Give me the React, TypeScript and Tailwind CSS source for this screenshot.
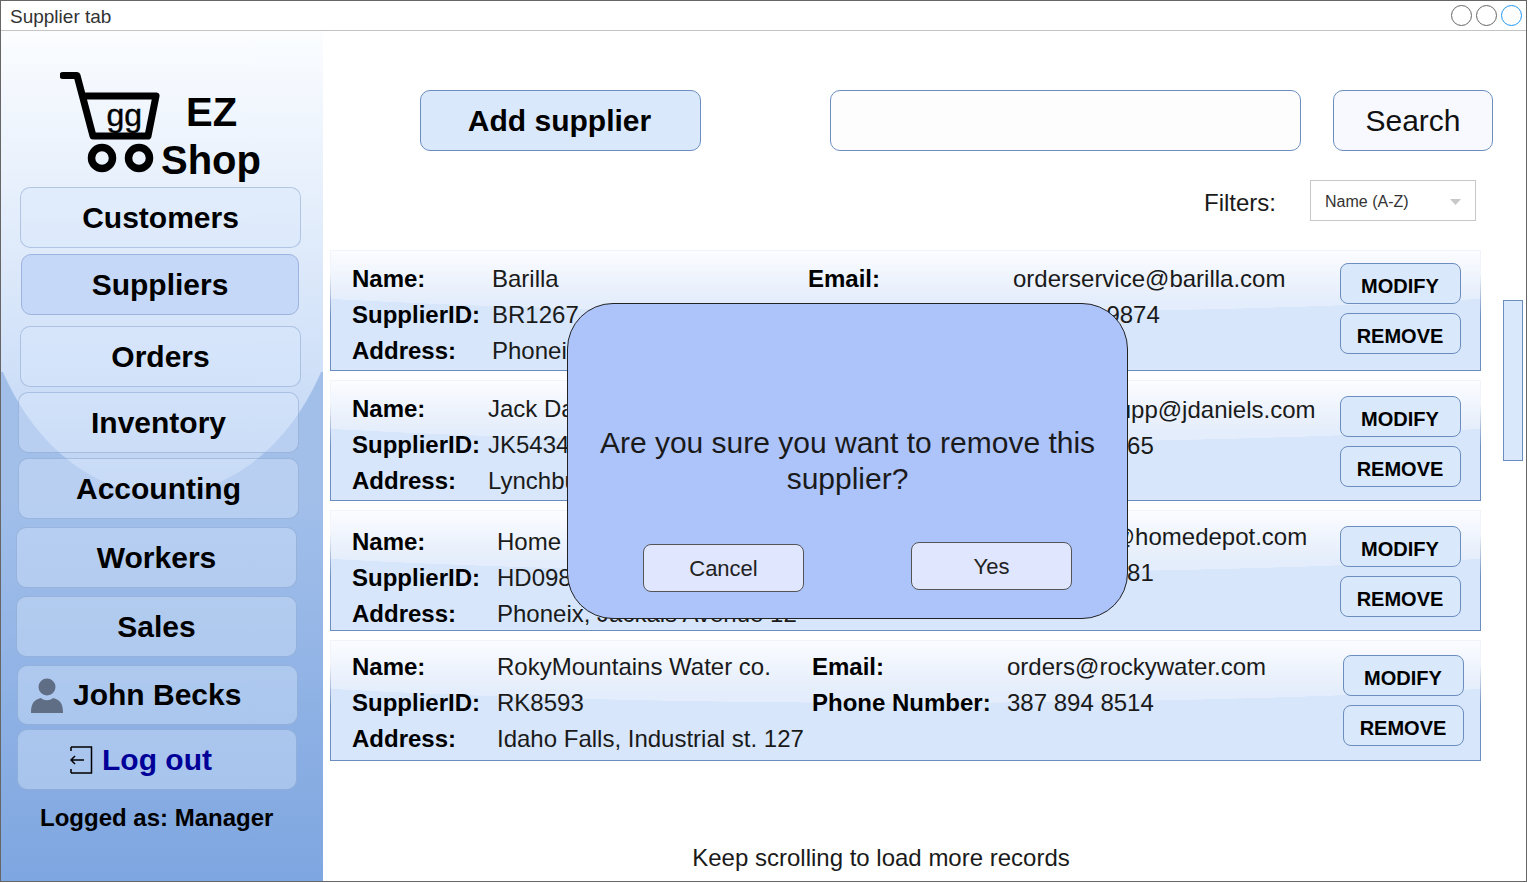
const navItems = [
  { label: "Customers", className: "mt-0 ml-[19px] w-[281px] h-[61px]" },
  { label: "Suppliers", className: "mt-[6px] ml-[20px] w-[278px] h-[61px] !bg-[#c6d8f8] !border-[#9db3e0]" },
  { label: "Orders", className: "mt-[11px] ml-[19px] w-[281px] h-[61px]" },
  { label: "Inventory", className: "mt-[5px] ml-[17px] w-[281px] h-[61px]" },
  { label: "Accounting", className: "mt-[5px] ml-[17px] w-[281px] h-[61px]" },
  { label: "Workers", className: "mt-[8px] ml-[15px] w-[281px] h-[61px]" },
  { label: "Sales", className: "mt-[8px] ml-[15px] w-[281px] h-[61px]" },
];

const suppliers = [
  {
    name: "Barilla",
    id: "BR1267",
    address: "Phoneix, Pasta Street 33",
    email: "orderservice@barilla.com",
    phone: "602 418 9874",
    leftClass: "w-[456px] grid-cols-[140px_1fr] pt-[10px]",
    rightClass: "grid-cols-[205px_auto] pt-[10px]",
    buttonClass: "mt-[12px] mr-[19px]",
  },
  {
    name: "Jack Daniels",
    id: "JK5434",
    address: "Lynchburg, Main Road 8",
    email: "customersupp@jdaniels.com",
    phone: "931 759 3365",
    leftClass: "w-[460px] grid-cols-[136px_1fr] pt-[10px]",
    rightClass: "grid-cols-[195px_auto] pt-[11px]",
    buttonClass: "mt-[15px] mr-[19px]",
  },
  {
    name: "Home Depot",
    id: "HD0987",
    address: "Phoneix, Jackals Avenue 12",
    email: "wholesale@homedepot.com",
    emailClass: "-ml-[3px]",
    phone: "480 226 7181",
    leftClass: "w-[460px] grid-cols-[145px_1fr] pt-[13px]",
    rightClass: "grid-cols-[195px_auto] pt-[8px]",
    buttonClass: "mt-[15px] mr-[19px]",
  },
  {
    name: "RokyMountains Water co.",
    id: "RK8593",
    address: "Idaho Falls, Industrial st. 127",
    email: "orders@rockywater.com",
    phone: "387 894 8514",
    leftClass: "w-[460px] grid-cols-[145px_1fr] pt-[8px]",
    rightClass: "grid-cols-[195px_auto] pt-[8px]",
    buttonClass: "mt-[14px] mr-[16px]",
  },
];

const navButton =
  "flex items-center justify-center rounded-[10px] border border-[#6c8ebf]/40 bg-[#dae8fc]/40 text-[30px] font-bold text-black";

function CartLogo() {
  return (
    <svg width="100" height="110" viewBox="60 70 100 110" className="shrink-0">
      <path
        d="M63 75.5 H77 L93 136 H148 L156 96 H86"
        fill="none"
        stroke="#000"
        strokeWidth="7"
        strokeLinecap="round"
        strokeLinejoin="round"
      />
      <circle cx="102" cy="158" r="10.5" fill="none" stroke="#000" strokeWidth="7.5" />
      <circle cx="139" cy="158" r="10.5" fill="none" stroke="#000" strokeWidth="7.5" />
      <text x="106.5" y="126" fontSize="32" fill="#000" stroke="#000" strokeWidth="0.4">
        gg
      </text>
    </svg>
  );
}

function UserIcon() {
  return (
    <svg width="34" height="38" viewBox="0 0 34 38" className="shrink-0">
      <circle cx="17" cy="11" r="8.5" fill="#5f6e84" />
      <path d="M1 37 C1 27 4 24 11 22 C14 25 20 25 23 22 C30 24 33 27 33 37 Z" fill="#5f6e84" />
    </svg>
  );
}

function LogoutIcon() {
  return (
    <svg width="24" height="28" viewBox="0 0 24 28" className="shrink-0">
      <path d="M2 1 H22.5 V27 H2 M2 1 V5 M2 23 V27" fill="none" stroke="#000" strokeWidth="1.5" />
      <path d="M15 14 H2 M6 10 L2 14 L6 18" fill="none" stroke="#000" strokeWidth="1.5" />
    </svg>
  );
}

function Sidebar() {
  return (
    <aside className="flex w-[322px] shrink-0 flex-col [background:radial-gradient(ellipse_184px_245px_at_50%_-122px,transparent_99.5%,#a2bfea_100%)_0_341px/100%_123px_no-repeat,linear-gradient(#fbfdff_0,#cfe0f8_341px,#bbd1f2_464px,#a2bfea_464px,#7ea6e0_100%)]">
      <div className="flex h-[156px] pt-[39px] pl-[59px]">
        <CartLogo />
        <div className="relative -ml-[1px] flex flex-col text-[40px] font-bold leading-[48px] text-black">
          <span className="mt-[18px] ml-[27px]">EZ</span>
          <span className="mt-0 ml-[2px]">Shop</span>
        </div>
      </div>
      {navItems.map((item) => (
        <button key={item.label} className={`${navButton} ${item.className}`}>
          {item.label}
        </button>
      ))}
      <div className={`${navButton} mt-[8px] ml-[16px] h-[60px] w-[281px] !justify-start gap-[9px] pl-[12px]`}>
        <UserIcon />
        <span className="pb-[2px]">John Becks</span>
      </div>
      <div className={`${navButton} mt-[4px] ml-[16px] h-[61px] w-[280px] !justify-start gap-[9px] pl-[51px] !text-[#000099]`}>
        <LogoutIcon />
        <span>Log out</span>
      </div>
      <p className="mt-[14px] ml-[39px] text-[24px] leading-[28px] font-bold text-black">Logged as: Manager</p>
    </aside>
  );
}

type Supplier = (typeof suppliers)[number] & { emailClass?: string };

function SupplierCard({ supplier }: { supplier: Supplier }) {
  return (
    <div className="flex h-[121px] w-[1151px] items-start border [border-image:linear-gradient(#f1f4fa_20%,#6c8ebf_55%)_1] pl-[21px] text-[24px] leading-[36px] whitespace-nowrap text-[#1a1a1a] [background:radial-gradient(ellipse_910px_62px_at_50%_0,transparent_99.5%,#d7e6fa_100%),linear-gradient(#fbfcff,#e4edfb_50px)]">
      <div className={`grid shrink-0 ${supplier.leftClass}`}>
        <b className="text-black">Name:</b>
        <span>{supplier.name}</span>
        <b className="text-black">SupplierID:</b>
        <span>{supplier.id}</span>
        <b className="text-black">Address:</b>
        <span>{supplier.address}</span>
      </div>
      <div className={`grid ${supplier.rightClass}`}>
        <b className="text-black">Email:</b>
        <span className={supplier.emailClass}>{supplier.email}</span>
        <b className="text-black">Phone Number:</b>
        <span>{supplier.phone}</span>
      </div>
      <div className={`ml-auto flex flex-col gap-[9px] ${supplier.buttonClass}`}>
        <button className="h-[41px] w-[121px] rounded-[8px] border border-[#6c8ebf] bg-[#dae8fc] pt-[5px] pr-[1px] text-[20px] leading-[28px] font-bold text-black">
          MODIFY
        </button>
        <button className="h-[41px] w-[121px] rounded-[8px] border border-[#6c8ebf] bg-[#dae8fc] pt-[4px] pr-[1px] text-[20px] leading-[28px] font-bold text-black">
          REMOVE
        </button>
      </div>
    </div>
  );
}

function ConfirmDialog() {
  return (
    <div className="absolute top-[302px] left-[566px] flex h-[316px] w-[561px] flex-col rounded-[46px] border border-[#222] bg-[#adc4fb]">
      <p className="mt-[121px] px-[20px] text-center text-[30px] leading-[36px] text-[#1a1a1a]">
        Are you sure you want to remove this supplier?
      </p>
      <div className="flex items-start pl-[75px] pt-[45px]">
        <button className="mt-[2px] h-[48px] w-[161px] rounded-[8px] border border-[#555] bg-[#dfe6fd] text-[22px] text-[#222]">
          Cancel
        </button>
        <button className="ml-[107px] h-[48px] w-[161px] rounded-[8px] border border-[#555] bg-[#dfe6fd] text-[22px] text-[#222]">
          Yes
        </button>
      </div>
    </div>
  );
}

export default function App() {
  return (
    <div className="relative flex h-[882px] w-[1527px] flex-col overflow-hidden border border-[#666] bg-white font-['Liberation_Sans',Arial,sans-serif]">
      <header className="flex h-[30px] shrink-0 items-center justify-between border-b border-[#c4c4c4] pr-[4px] pl-[9px]">
        <span className="pt-[4px] text-[19px] text-[#333]">Supplier tab</span>
        <div className="flex gap-[4px]">
          <span className="h-[21px] w-[21px] rounded-full border border-[#666]" />
          <span className="h-[21px] w-[21px] rounded-full border border-[#666]" />
          <span className="h-[21px] w-[21px] rounded-full border border-[#2196f3]" />
        </div>
      </header>
      <div className="flex min-h-0 flex-1">
        <Sidebar />
        <main className="flex min-w-0 flex-1 flex-col">
          <div className="mt-[59px] ml-[97px] flex h-[61px] shrink-0">
            <button className="w-[281px] rounded-[10px] border border-[#6c8ebf] bg-[#dae8fc] pr-[2px] text-[30px] font-bold text-black">
              Add supplier
            </button>
            <input className="ml-[129px] w-[471px] rounded-[10px] border border-[#6c8ebf] bg-[#fdfdfe]" />
            <button className="ml-[32px] w-[160px] rounded-[10px] border border-[#6c8ebf] bg-[#f8f9fe] text-[30px] text-[#111]">
              Search
            </button>
          </div>
          <div className="mt-[29px] mr-[50px] flex h-[41px] shrink-0 items-center justify-end gap-[34px]">
            <span className="mt-[5px] text-[24px] text-[#1a1a1a]">Filters:</span>
            <div className="flex h-[41px] w-[166px] items-center justify-between border border-[#c8c8c8] px-[14px] pt-[2px] text-[16px] text-[#333]">
              <span>Name (A-Z)</span>
              <svg width="11" height="6" viewBox="0 0 11 6">
                <path d="M0 0 H11 L5.5 6 Z" fill="#c8c8c8" />
              </svg>
            </div>
          </div>
          <div className="mt-[29px] ml-[7px] flex flex-col gap-[9px]">
            {suppliers.map((supplier) => (
              <SupplierCard key={supplier.id} supplier={supplier} />
            ))}
          </div>
          <p className="mt-[79px] ml-[7px] w-[1102px] text-center text-[24px] leading-[36px] text-[#1a1a1a]">
            Keep scrolling to load more records
          </p>
        </main>
      </div>
      <div className="absolute top-[299px] left-[1502px] h-[161px] w-[20px] border border-[#6c8ebf] bg-[#dae8fc]" />
      <ConfirmDialog />
    </div>
  );
}
